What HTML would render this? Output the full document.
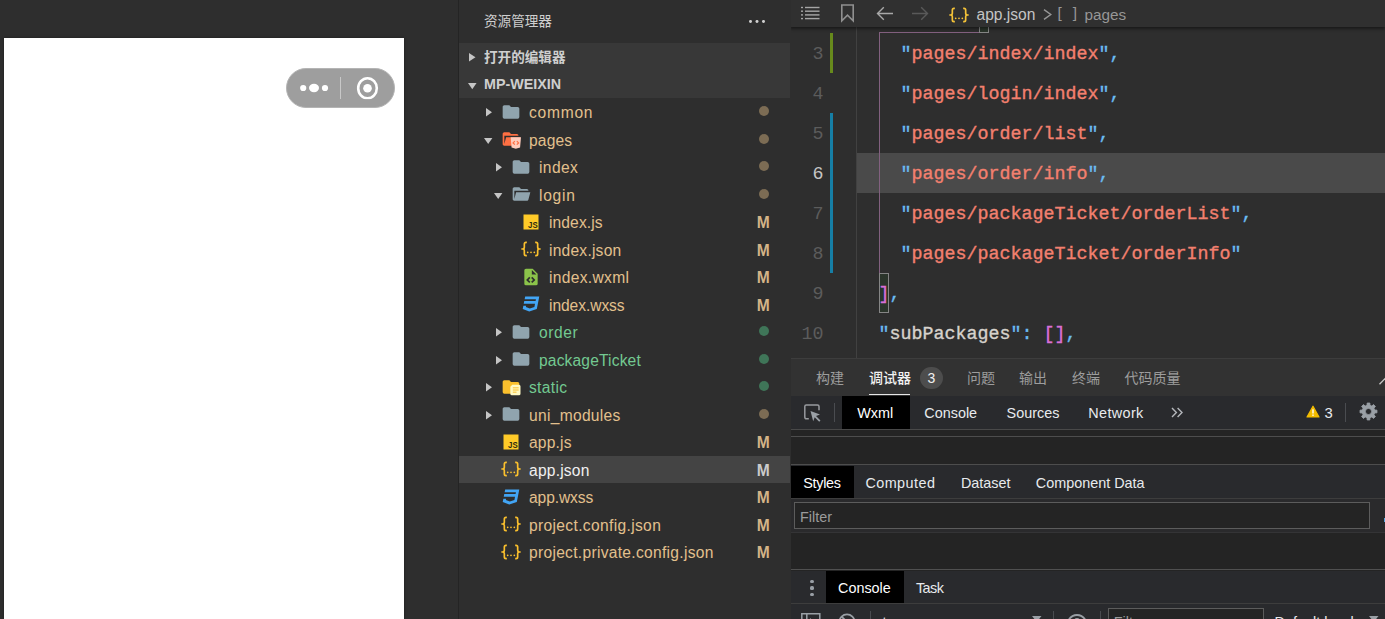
<!DOCTYPE html>
<html lang="zh-CN">
<head>
<meta charset="utf-8">
<title>app.json</title>
<style>
*{box-sizing:border-box;margin:0;padding:0}
html,body{width:1385px;height:619px;overflow:hidden;background:#2e2e2e}
body{position:relative;font-family:"Liberation Sans","Noto Sans CJK SC",sans-serif;color:#ccc;font-size:15.5px}
.abs{position:absolute}
svg{display:block;position:absolute;overflow:visible}

/* simulator */
#sim{left:0;top:0;width:458px;height:619px;background:#2e2e2e}
#phone{left:4px;top:38px;width:400px;height:581px;background:#fff;box-shadow:0 0 3px rgba(0,0,0,.35)}
#capsule{left:286px;top:68px;width:109px;height:40px;border-radius:20px;background:#9e9e9e;border:1px solid #b4b4b4}

/* explorer */
#exp{left:458px;top:0;width:332px;height:619px;background:#2e2e2e;border-left:1px solid #242424}
#exp .title{left:25px;top:0;height:43px;line-height:44.5px;font-size:13.6px;color:#cfcfcf}
#exp .band{left:0;top:43px;width:331px;height:55px;background:#383838}
.sec{left:25px;height:27.5px;line-height:27.5px;font-size:13.6px;font-weight:bold;color:#cfcfcf;white-space:nowrap}
.row{left:0;width:331px;height:27.5px;line-height:27.5px;white-space:nowrap}
.row .t{position:absolute;top:0;color:#e2c08d;font-size:15.6px}
.row.g .t{color:#73c991}
.row .m{position:absolute;left:290.700px;top:0;width:20px;text-align:right;color:#d3b488;font-weight:bold;font-size:15.6px}
.row .d{position:absolute;left:300px;top:7.75px;width:10px;height:10px;border-radius:5px;background:#7c6c54}
.row.g .d{background:#3f7558}
.row.sel{background:#444;height:27px}
.row.sel .t{color:#f0f0f0}.row.sel .m{color:#cbcbcb}

/* editor */
#ed{left:790px;top:0;width:595px;height:358px;background:#2e2e2e;overflow:hidden}
#ed:after{content:"";position:absolute;left:0;top:0;width:1px;height:358px;background:#2e2e2e}
#crumb{left:0;top:0;width:595px;height:27px;background:#303030;box-shadow:0 2px 3px rgba(0,0,0,.45)}
.code{font-family:"Liberation Mono",monospace;font-size:18.33px;white-space:pre;height:40px;line-height:40px;color:#d4d4d4;-webkit-text-stroke:.35px currentColor}
.ln{font-family:"Liberation Mono",monospace;font-size:18.33px;left:0;width:33.5px;text-align:right;height:40px;line-height:40px;color:#5c5c5c}
.s{color:#f3806f;-webkit-text-stroke-color:#f3806f}.q{color:#6cbcf2;-webkit-text-stroke-color:#6cbcf2}.p{color:#da70d6;-webkit-text-stroke-color:#da70d6}.k{color:#d6d2cc;-webkit-text-stroke-color:#d6d2cc}

/* panel */
#panel{left:790px;top:358px;width:595px;height:261px;background:#242424;overflow:hidden}
#panel:after{content:"";position:absolute;left:0;top:0;width:1px;height:261px;background:#2e2e2e}
.dt{font-size:14.4px;color:#e8eaed;white-space:nowrap}
</style>
</head>
<body>

<!-- ============ simulator ============ -->
<div id="sim" class="abs">
  <div id="phone" class="abs"></div>
  <div id="capsule" class="abs"></div>
  <svg style="left:286px;top:68px" width="109" height="40" viewBox="0 0 109 40">
    <circle cx="17.2" cy="20" r="3.1" fill="#fff"/>
    <ellipse cx="28" cy="20" rx="5" ry="4.2" fill="#fff"/>
    <circle cx="39" cy="20" r="3.1" fill="#fff"/>
    <rect x="54" y="9" width="1" height="22" fill="#c8c8c8"/>
    <clipPath id="cc"><rect x="60" y="0" width="40" height="31.200"/></clipPath><ellipse cx="81.500" cy="20.200" rx="9.300" ry="10" fill="none" stroke="#fff" stroke-width="2.600" clip-path="url(#cc)"/>
    <circle cx="81.5" cy="20.3" r="4.3" fill="#fff"/>
  </svg>
</div>

<!-- ============ explorer ============ -->
<div id="exp" class="abs">
  <div class="title abs">资源管理器</div>
  <div class="band abs"></div>
  <div class="sec abs" style="top:43.5px">打开的编辑器</div>
  <div class="sec abs" style="top:71px;font-size:14.3px">MP-WEIXIN</div>
  <svg style="left:10px;top:53.300px" width="6.500" height="8.600" viewBox="0 0 6.500 8.600"><path fill="#c5c5c5" d="M0 0L6.500 4.300 0 8.600z"/></svg>
  <svg style="left:8.600px;top:82.600px" width="8.600" height="6.200" viewBox="0 0 8.600 6.200"><path fill="#c5c5c5" d="M0 0h8.600L4.300 6.200z"/></svg>
  <div class="abs" style="left:290.300px;top:19.800px;width:2.800px;height:2.800px;border-radius:50%;background:#d0d0d0;box-shadow:6.500px 0 0 #d0d0d0,13px 0 0 #d0d0d0"></div>
  <div class="row abs" style="top:98.5px"><svg style="left:27px;top:9.6px" width="6" height="8.4" viewBox="0 0 6 8.4"><path fill="#c5c5c5" d="M0 0L6 4.200 0 8.400z"/></svg><svg style="left:42px;top:3.75px" width="20" height="20" viewBox="0 0 24 24"><path fill="#90a4ae" d="M10 4H4c-1.11 0-2 .89-2 2v12a2 2 0 0 0 2 2h16a2 2 0 0 0 2-2V8c0-1.11-.9-2-2-2h-8l-2-2z"/></svg><span class="t" style="left:70px;top:0.5px;letter-spacing:0.75px">common</span><span class="d"></span></div>
  <div class="row abs" style="top:126.0px"><svg style="left:25px;top:12px" width="8.4" height="6" viewBox="0 0 8.4 6"><path fill="#c5c5c5" d="M0 0h8.400L4.200 6z"/></svg><svg style="left:42px;top:2.75px" width="20" height="20" viewBox="0 0 24 24"><path fill="#ff7043" d="M19 20H4c-1.11 0-2-.9-2-2V6c0-1.11.89-2 2-2h6l2 2h7a2 2 0 0 1 2 2H4v10l2.14-8h17.07l-2.28 8.5c-.23.87-1.01 1.5-1.93 1.5z"/><path fill="#ffccbc" d="M11.6 10h12.4l-1.1 12.2-5.1 1.6-5.1-1.6z"/><path fill="none" stroke="#ff7043" stroke-width="1.5" d="M16.6 14.6l-2.1 2.1 2.1 2.1M19 14.6l2.1 2.1-2.1 2.1"/></svg><span class="t" style="left:70px;top:1px;letter-spacing:0.16px">pages</span><span class="d"></span></div>
  <div class="row abs" style="top:153.5px"><svg style="left:37px;top:9.6px" width="6" height="8.4" viewBox="0 0 6 8.4"><path fill="#c5c5c5" d="M0 0L6 4.200 0 8.400z"/></svg><svg style="left:52px;top:3.75px" width="20" height="20" viewBox="0 0 24 24"><path fill="#90a4ae" d="M10 4H4c-1.11 0-2 .89-2 2v12a2 2 0 0 0 2 2h16a2 2 0 0 0 2-2V8c0-1.11-.9-2-2-2h-8l-2-2z"/></svg><span class="t" style="left:80px;top:0.5px;letter-spacing:0.4px">index</span><span class="d"></span></div>
  <div class="row abs" style="top:181.0px"><svg style="left:35px;top:12px" width="8.4" height="6" viewBox="0 0 8.4 6"><path fill="#c5c5c5" d="M0 0h8.400L4.200 6z"/></svg><svg style="left:52px;top:2.75px" width="20" height="20" viewBox="0 0 24 24"><path fill="#90a4ae" d="M19 20H4c-1.11 0-2-.9-2-2V6c0-1.11.89-2 2-2h6l2 2h7a2 2 0 0 1 2 2H4v10l2.14-8h17.07l-2.28 8.5c-.23.87-1.01 1.5-1.93 1.5z"/></svg><span class="t" style="left:80px;top:1px;letter-spacing:0.72px">login</span><span class="d"></span></div>
  <div class="row abs" style="top:208.5px"><svg style="left:62px;top:3.75px" width="20" height="20" viewBox="0 0 24 24"><rect x="3" y="3" width="18" height="18" fill="#ffca28"/><text x="20" y="19.6" text-anchor="end" font-family="Liberation Sans, sans-serif" font-weight="bold" font-size="10.5" fill="#2e2a10" textLength="11.5" lengthAdjust="spacingAndGlyphs">JS</text></svg><span class="t" style="left:90px;top:0.5px;letter-spacing:0.1px">index.js</span><span class="m" style="top:0.5px">M</span></div>
  <div class="row abs" style="top:236.0px"><svg style="left:62px;top:2.75px" width="20" height="20" viewBox="0 0 24 24"><path fill="none" stroke="#fbc02d" stroke-width="2" stroke-linejoin="round" d="M7 4H6a2 2 0 0 0-2 2v4a2 2 0 0 1-2 2h-1.6M.4 12H2a2 2 0 0 1 2 2v4a2 2 0 0 0 2 2h1M17 4h1a2 2 0 0 1 2 2v4a2 2 0 0 0 2 2h1.6M23.600 12H22a2 2 0 0 0-2 2v4a2 2 0 0 1-2 2h-1"/><circle cx="8" cy="16" r="1.05" fill="#fbc02d"/><circle cx="12" cy="16" r="1.05" fill="#fbc02d"/><circle cx="16" cy="16" r="1.05" fill="#fbc02d"/></svg><span class="t" style="left:90px;top:1px;letter-spacing:0.22px">index.json</span><span class="m" style="top:1px">M</span></div>
  <div class="row abs" style="top:263.5px"><svg style="left:62px;top:3.75px" width="20" height="20" viewBox="0 0 24 24"><path fill="#8bc34a" d="M13 9h5.5L13 3.500V9M6 2h8l6 6v12a2 2 0 0 1-2 2H6a2 2 0 0 1-2-2V4c0-1.11.89-2 2-2m.12 13.500l3.740 3.740 1.420-1.410-2.330-2.330 2.330-2.330-1.420-1.410-3.740 3.740m11.160 0l-3.740-3.740-1.420 1.410 2.330 2.330-2.330 2.330 1.420 1.410 3.740-3.740z"/></svg><span class="t" style="left:90px;top:0.5px;letter-spacing:0.31px">index.wxml</span><span class="m" style="top:0.5px">M</span></div>
  <div class="row abs" style="top:291.0px"><svg style="left:62px;top:2.75px" width="20" height="20" viewBox="0 0 24 24"><path fill="#42a5f5" d="M5 3l-.65 3.340h13.590L17.500 8.500H3.920l-.66 3.330h13.590l-.76 3.810-5.480 1.810-4.750-1.810.33-1.640H2.850l-.79 4 7.850 3 9.050-3 1.200-6.030.24-1.210L21.940 3H5z"/></svg><span class="t" style="left:90px;top:1px;letter-spacing:-0.07px">index.wxss</span><span class="m" style="top:1px">M</span></div>
  <div class="row abs g" style="top:318.5px"><svg style="left:37px;top:9.6px" width="6" height="8.4" viewBox="0 0 6 8.4"><path fill="#c5c5c5" d="M0 0L6 4.200 0 8.400z"/></svg><svg style="left:52px;top:3.75px" width="20" height="20" viewBox="0 0 24 24"><path fill="#90a4ae" d="M10 4H4c-1.11 0-2 .89-2 2v12a2 2 0 0 0 2 2h16a2 2 0 0 0 2-2V8c0-1.11-.9-2-2-2h-8l-2-2z"/></svg><span class="t" style="left:80px;top:0.5px;letter-spacing:0.58px">order</span><span class="d"></span></div>
  <div class="row abs g" style="top:346.0px"><svg style="left:37px;top:9.6px" width="6" height="8.4" viewBox="0 0 6 8.4"><path fill="#c5c5c5" d="M0 0L6 4.200 0 8.400z"/></svg><svg style="left:52px;top:2.75px" width="20" height="20" viewBox="0 0 24 24"><path fill="#90a4ae" d="M10 4H4c-1.11 0-2 .89-2 2v12a2 2 0 0 0 2 2h16a2 2 0 0 0 2-2V8c0-1.11-.9-2-2-2h-8l-2-2z"/></svg><span class="t" style="left:80px;top:1px;letter-spacing:0.15px">packageTicket</span><span class="d"></span></div>
  <div class="row abs g" style="top:373.5px"><svg style="left:27px;top:9.6px" width="6" height="8.4" viewBox="0 0 6 8.4"><path fill="#c5c5c5" d="M0 0L6 4.200 0 8.400z"/></svg><svg style="left:42px;top:3.75px" width="20" height="20" viewBox="0 0 24 24"><path fill="#fbc02d" d="M10 4H4c-1.11 0-2 .89-2 2v12a2 2 0 0 0 2 2h16a2 2 0 0 0 2-2V8c0-1.11-.9-2-2-2h-8l-2-2z"/><path fill="#fff9c4" d="M13.600 9.400h8a1.800 1.800 0 0 1 1.800 1.800v9a1.800 1.800 0 0 1-1.800 1.800h-8.600a1.800 1.800 0 0 1-1.800-1.800v-8.400z"/><path fill="none" stroke="#fbc02d" stroke-width="1.200" d="M14.200 13h7M14.200 15.600h7M14.200 18.200h4.400"/></svg><span class="t" style="left:70px;top:0.5px;letter-spacing:0.32px">static</span><span class="d"></span></div>
  <div class="row abs" style="top:401.0px"><svg style="left:27px;top:9.6px" width="6" height="8.4" viewBox="0 0 6 8.4"><path fill="#c5c5c5" d="M0 0L6 4.200 0 8.400z"/></svg><svg style="left:42px;top:2.75px" width="20" height="20" viewBox="0 0 24 24"><path fill="#90a4ae" d="M10 4H4c-1.11 0-2 .89-2 2v12a2 2 0 0 0 2 2h16a2 2 0 0 0 2-2V8c0-1.11-.9-2-2-2h-8l-2-2z"/></svg><span class="t" style="left:70px;top:1px;letter-spacing:0.29px">uni_modules</span><span class="d"></span></div>
  <div class="row abs" style="top:428.5px"><svg style="left:42px;top:3.75px" width="20" height="20" viewBox="0 0 24 24"><rect x="3" y="3" width="18" height="18" fill="#ffca28"/><text x="20" y="19.6" text-anchor="end" font-family="Liberation Sans, sans-serif" font-weight="bold" font-size="10.5" fill="#2e2a10" textLength="11.5" lengthAdjust="spacingAndGlyphs">JS</text></svg><span class="t" style="left:70px;top:0.5px;letter-spacing:0.17px">app.js</span><span class="m" style="top:0.5px">M</span></div>
  <div class="row abs sel" style="top:456.0px"><svg style="left:42px;top:2.75px" width="20" height="20" viewBox="0 0 24 24"><path fill="none" stroke="#fbc02d" stroke-width="2" stroke-linejoin="round" d="M7 4H6a2 2 0 0 0-2 2v4a2 2 0 0 1-2 2h-1.6M.4 12H2a2 2 0 0 1 2 2v4a2 2 0 0 0 2 2h1M17 4h1a2 2 0 0 1 2 2v4a2 2 0 0 0 2 2h1.6M23.600 12H22a2 2 0 0 0-2 2v4a2 2 0 0 1-2 2h-1"/><circle cx="8" cy="16" r="1.05" fill="#fbc02d"/><circle cx="12" cy="16" r="1.05" fill="#fbc02d"/><circle cx="16" cy="16" r="1.05" fill="#fbc02d"/></svg><span class="t" style="left:70px;top:1px;letter-spacing:0.21px">app.json</span><span class="m" style="top:1px">M</span></div>
  <div class="row abs" style="top:483.5px"><svg style="left:42px;top:3.75px" width="20" height="20" viewBox="0 0 24 24"><path fill="#42a5f5" d="M5 3l-.65 3.340h13.590L17.500 8.500H3.920l-.66 3.330h13.590l-.76 3.810-5.480 1.810-4.750-1.810.33-1.640H2.850l-.79 4 7.850 3 9.050-3 1.200-6.030.24-1.210L21.940 3H5z"/></svg><span class="t" style="left:70px;top:0.5px;letter-spacing:-0.1px">app.wxss</span><span class="m" style="top:0.5px">M</span></div>
  <div class="row abs" style="top:511.0px"><svg style="left:42px;top:2.75px" width="20" height="20" viewBox="0 0 24 24"><path fill="none" stroke="#fbc02d" stroke-width="2" stroke-linejoin="round" d="M7 4H6a2 2 0 0 0-2 2v4a2 2 0 0 1-2 2h-1.6M.4 12H2a2 2 0 0 1 2 2v4a2 2 0 0 0 2 2h1M17 4h1a2 2 0 0 1 2 2v4a2 2 0 0 0 2 2h1.6M23.600 12H22a2 2 0 0 0-2 2v4a2 2 0 0 1-2 2h-1"/><circle cx="8" cy="16" r="1.05" fill="#fbc02d"/><circle cx="12" cy="16" r="1.05" fill="#fbc02d"/><circle cx="16" cy="16" r="1.05" fill="#fbc02d"/></svg><span class="t" style="left:70px;top:1px;letter-spacing:0.34px">project.config.json</span><span class="m" style="top:1px">M</span></div>
  <div class="row abs" style="top:538.5px"><svg style="left:42px;top:3.75px" width="20" height="20" viewBox="0 0 24 24"><path fill="none" stroke="#fbc02d" stroke-width="2" stroke-linejoin="round" d="M7 4H6a2 2 0 0 0-2 2v4a2 2 0 0 1-2 2h-1.6M.4 12H2a2 2 0 0 1 2 2v4a2 2 0 0 0 2 2h1M17 4h1a2 2 0 0 1 2 2v4a2 2 0 0 0 2 2h1.6M23.600 12H22a2 2 0 0 0-2 2v4a2 2 0 0 1-2 2h-1"/><circle cx="8" cy="16" r="1.05" fill="#fbc02d"/><circle cx="12" cy="16" r="1.05" fill="#fbc02d"/><circle cx="16" cy="16" r="1.05" fill="#fbc02d"/></svg><span class="t" style="left:70px;top:0.5px;letter-spacing:0.29px">project.private.config.json</span><span class="m" style="top:0.5px">M</span></div>
</div>

<!-- ============ editor ============ -->
<div id="ed" class="abs">
  <div class="abs" style="left:66px;top:27px;width:1px;height:331px;background:#414141"></div>
  <div class="abs" style="left:66.5px;top:153.3px;width:529px;height:39.600px;background:#4a4a4a"></div>
  <div class="abs" style="left:40px;top:33px;width:3px;height:40px;background:#678a1c"></div>
  <div class="abs" style="left:40px;top:113px;width:3px;height:160px;background:#167fa6"></div>
  <div class="abs" style="left:89.0px;top:32px;width:1px;height:241px;background:#82607f"></div>
  <div class="abs" style="left:89.0px;top:31.8px;width:109px;height:1px;background:#82607f"></div>
  <div class="abs" style="left:188.5px;top:-7px;width:10px;height:40px;border:1px solid #858585;background:#2b352b"></div>
  <div class="abs" style="left:89.0px;top:273px;width:10px;height:40px;border:1px solid #858585;background:#2b352b"></div>
  <div class="ln abs" style="top:-5.5px">2</div>
  <div class="code abs" style="left:66.5px;top:-5.5px">  <span class="k">"pages"</span><span class="q">:</span> <span class="p">[</span></div>
  <div class="ln abs" style="top:34.5px">3</div>
  <div class="code abs" style="left:66.5px;top:34.5px">    <span class="q">"</span><span class="s">pages/index/index</span><span class="q">",</span></div>
  <div class="ln abs" style="top:74.5px">4</div>
  <div class="code abs" style="left:66.5px;top:74.5px">    <span class="q">"</span><span class="s">pages/login/index</span><span class="q">",</span></div>
  <div class="ln abs" style="top:114.5px">5</div>
  <div class="code abs" style="left:66.5px;top:114.5px">    <span class="q">"</span><span class="s">pages/order/list</span><span class="q">",</span></div>
  <div class="ln abs" style="top:154.5px;color:#c6c6c6">6</div>
  <div class="code abs" style="left:66.5px;top:154.5px">    <span class="q">"</span><span class="s">pages/order/info</span><span class="q">",</span></div>
  <div class="ln abs" style="top:194.5px">7</div>
  <div class="code abs" style="left:66.5px;top:194.5px">    <span class="q">"</span><span class="s">pages/packageTicket/orderList</span><span class="q">",</span></div>
  <div class="ln abs" style="top:234.5px">8</div>
  <div class="code abs" style="left:66.5px;top:234.5px">    <span class="q">"</span><span class="s">pages/packageTicket/orderInfo</span><span class="q">"</span></div>
  <div class="ln abs" style="top:274.5px">9</div>
  <div class="code abs" style="left:66.5px;top:274.5px">  <span class="p">]</span><span class="q">,</span></div>
  <div class="ln abs" style="top:314.5px">10</div>
  <div class="code abs" style="left:66.5px;top:314.5px">  <span class="q">"</span><span class="k">subPackages</span><span class="q">":</span> <span class="p">[]</span><span class="q">,</span></div>
  <div id="crumb" class="abs"></div>
  <svg style="left:11px;top:6px" width="19" height="14" viewBox="0 0 19 14"><g fill="#a6a6a6"><rect x="0" y="0.8" width="2" height="1.4"/><rect x="4" y="0.8" width="14.500" height="1.4"/><rect x="0" y="4.5" width="2" height="1.4"/><rect x="4" y="4.5" width="14.500" height="1.4"/><rect x="0" y="8.2" width="2" height="1.4"/><rect x="4" y="8.2" width="14.500" height="1.4"/><rect x="0" y="11.9" width="2" height="1.4"/><rect x="4" y="11.9" width="14.500" height="1.4"/></g></svg>
  <svg style="left:50px;top:3px" width="16" height="20" viewBox="0 0 16 20"><path fill="none" stroke="#8f8f8f" stroke-width="1.6" d="M1.800 2h11.400v15.800L7.500 12.200 1.800 17.800z"/></svg>
  <svg style="left:86px;top:6px" width="18" height="15" viewBox="0 0 18 15"><path fill="none" stroke="#a8a8a8" stroke-width="1.4" d="M1.500 7.500h15.500M7.800 1.200L1.500 7.500l6.300 6.300"/></svg>
  <svg style="left:121px;top:6px" width="18" height="15" viewBox="0 0 18 15"><path fill="none" stroke="#595959" stroke-width="1.4" d="M1 7.500h15.500M10.200 1.200l6.300 6.300-6.300 6.300"/></svg>
  <svg style="left:159px;top:4.5px" width="20" height="20" viewBox="0 0 24 24"><path fill="none" stroke="#f5c338" stroke-width="2" stroke-linejoin="round" d="M7 4H6a2 2 0 0 0-2 2v4a2 2 0 0 1-2 2h-1.6M.4 12H2a2 2 0 0 1 2 2v4a2 2 0 0 0 2 2h1M17 4h1a2 2 0 0 1 2 2v4a2 2 0 0 0 2 2h1.6M23.600 12H22a2 2 0 0 0-2 2v4a2 2 0 0 1-2 2h-1"/><circle cx="8" cy="16" r="1.05" fill="#f5c338"/><circle cx="12" cy="16" r="1.05" fill="#f5c338"/><circle cx="16" cy="16" r="1.05" fill="#f5c338"/></svg>
  <div class="abs" style="left:186.500px;top:1px;height:27px;line-height:28px;font-size:15.6px;color:#c4c4c4;white-space:nowrap">app.json</div>
  <svg style="left:253px;top:9px" width="9" height="11" viewBox="0 0 9 11"><path fill="none" stroke="#979797" stroke-width="1.4" d="M1 .600l6.800 4.900L1 10.400"/></svg>
  <div class="abs" style="left:267.500px;top:0;height:27px;line-height:26px;font-size:15.4px;color:#979797;white-space:pre;letter-spacing:3.300px">[ ]</div>
  <div class="abs" style="left:294.500px;top:1px;height:27px;line-height:28px;font-size:15.3px;color:#979797;white-space:nowrap">pages</div>
</div>

<!-- ============ bottom panel ============ -->
<div id="panel" class="abs">
  <div class="abs" style="left:0px;top:0px;width:595px;height:37.5px;background:#323232"></div>
  <div class="abs" style="left:0px;top:0px;width:595px;height:1px;background:#3d3d3d"></div>
  <div class=" abs" style="left:26px;top:5.4px;height:30px;line-height:30px;font-size:14px;color:#9d9d9d;white-space:nowrap">构建</div>
  <div class=" abs" style="left:79px;top:5.4px;height:30px;line-height:30px;font-size:14px;color:#9d9d9d;white-space:nowrap;color:#f2f2f2;font-weight:500">调试器</div>
  <div class="abs" style="left:79px;top:36px;width:40.8px;height:1.2px;background:#e6e6e6"></div>
  <div class="abs" style="left:130.20000000000005px;top:8.800000000000011px;width:22.400px;height:22.400px;border-radius:50%;background:#4d4d4d;color:#f0f0f0;font-size:14px;line-height:22.400px;text-align:center">3</div>
  <div class=" abs" style="left:177px;top:5.4px;height:30px;line-height:30px;font-size:14px;color:#9d9d9d;white-space:nowrap">问题</div>
  <div class=" abs" style="left:229px;top:5.4px;height:30px;line-height:30px;font-size:14px;color:#9d9d9d;white-space:nowrap">输出</div>
  <div class=" abs" style="left:282px;top:5.4px;height:30px;line-height:30px;font-size:14px;color:#9d9d9d;white-space:nowrap">终端</div>
  <div class=" abs" style="left:334.5px;top:5.4px;height:30px;line-height:30px;font-size:14px;color:#9d9d9d;white-space:nowrap">代码质量</div>
  <svg style="left:589px;top:18px" width="8" height="9" viewBox="0 0 8 9"><path fill="none" stroke="#c8c8c8" stroke-width="1.3" d="M.500 8.300L7.500 1"/></svg>
  <div class="abs" style="left:0px;top:37.5px;width:595px;height:33.5px;background:#292a2d"></div>
  <div class="abs" style="left:0px;top:71px;width:595px;height:1px;background:#494949"></div>
  <svg style="left:13px;top:45px" width="19" height="19" viewBox="0 0 19 19"><path fill="none" stroke="#989a9e" stroke-width="1.5" d="M5.800 15.800H3.300a1.500 1.500 0 0 1-1.500-1.500V3.500A1.500 1.500 0 0 1 3.300 2h11.200A1.500 1.500 0 0 1 16 3.500v3.700"/><path fill="#9aa0a6" d="M7.500 8l9.500 3.400-4 1.500 4.500 4.500-1.300 1.300-4.500-4.500-1.500 4z"/></svg>
  <div class="abs" style="left:44px;top:44.5px;width:1px;height:19.5px;background:#4a4c50"></div>
  <div class="abs" style="left:52px;top:38px;width:68px;height:33px;background:#000"></div>
  <div class="dt abs" style="left:67.2px;top:39.5px;height:30px;line-height:30px;color:#fff">Wxml</div>
  <div class="dt abs" style="left:134.3px;top:39.5px;height:30px;line-height:30px">Console</div>
  <div class="dt abs" style="left:216.6px;top:39.5px;height:30px;line-height:30px">Sources</div>
  <div class="dt abs" style="left:298.3px;top:39.5px;height:30px;line-height:30px;letter-spacing:.37px">Network</div>
  <svg style="left:380.5px;top:49px" width="12" height="11" viewBox="0 0 12 11"><path fill="none" stroke="#b4b7bb" stroke-width="1.4" d="M1 1l4.400 4.500L1 10M6.600 1L11 5.500 6.600 10"/></svg>
  <svg style="left:516px;top:47px" width="14" height="13" viewBox="0 0 14 13"><path fill="#f4bd00" stroke="#f4bd00" stroke-width="1.2" stroke-linejoin="round" d="M7 1.200L13 12H1z"/><rect x="6.300" y="4.300" width="1.400" height="4.200" fill="#fff"/><rect x="6.300" y="9.500" width="1.400" height="1.400" fill="#fff"/></svg>
  <div class="dt abs" style="left:534.6px;top:39.5px;height:30px;line-height:30px;font-size:14.8px">3</div>
  <div class="abs" style="left:554.7px;top:44.5px;width:1px;height:19.5px;background:#4a4c50"></div>
  <svg style="left:569px;top:44.39999999999998px" width="19" height="19" viewBox="0 0 19 19"><path fill="#9aa0a6" fill-rule="evenodd" stroke="#9aa0a6" stroke-width=".8" stroke-linejoin="round" d="M8.01 3.28L8.15 1.01L10.85 1.01L10.99 3.28L12.84 4.04L14.55 2.54L16.46 4.45L14.96 6.16L15.72 8.01L17.99 8.15L17.99 10.85L15.72 10.99L14.96 12.84L16.46 14.55L14.55 16.46L12.84 14.96L10.99 15.72L10.85 17.99L8.15 17.99L8.01 15.72L6.16 14.96L4.45 16.46L2.54 14.55L4.04 12.84L3.28 10.99L1.01 10.85L1.01 8.15L3.28 8.01L4.04 6.16L2.54 4.45L4.45 2.54L6.16 4.04zM6.40 9.50a3.1 3.1 0 1 0 6.2 0a3.1 3.1 0 1 0 -6.2 0z"/></svg>
  <div class="abs" style="left:0px;top:78px;width:595px;height:1px;background:#4d4d4d"></div>
  <div class="abs" style="left:0px;top:105.8px;width:595px;height:1.2px;background:#4d4d4d"></div>
  <div class="abs" style="left:0px;top:107px;width:595px;height:33px;background:#292a2d"></div>
  <div class="abs" style="left:0px;top:140px;width:595px;height:1px;background:#3d3d3d"></div>
  <div class="abs" style="left:1px;top:107.8px;width:63px;height:32.2px;background:#000"></div>
  <div class="dt abs" style="left:13.3px;top:109.5px;height:30px;line-height:30px;color:#fff;letter-spacing:-.3px">Styles</div>
  <div class="dt abs" style="left:75.4px;top:109.5px;height:30px;line-height:30px;letter-spacing:.45px">Computed</div>
  <div class="dt abs" style="left:170.9px;top:109.5px;height:30px;line-height:30px">Dataset</div>
  <div class="dt abs" style="left:245.8px;top:109.5px;height:30px;line-height:30px">Component Data</div>
  <div class="abs" style="left:0px;top:141px;width:595px;height:33.5px;background:#2a2a2c"></div>
  <div class="abs" style="left:4px;top:144px;width:576px;height:26.700px;border:1px solid #5c5c5c;background:#242424"></div>
  <div class="dt abs" style="left:10px;top:143.7px;height:30px;line-height:30px;color:#9b9b9b">Filter</div>
  <div class="abs" style="left:593.6px;top:159.5px;width:1.4px;height:4px;background:#58a6dd"></div>
  <div class="abs" style="left:0px;top:173.8px;width:595px;height:1.2px;background:#343436"></div>
  <div class="abs" style="left:0px;top:211.2px;width:595px;height:1.2px;background:#505050"></div>
  <div class="abs" style="left:0px;top:212.5px;width:595px;height:32.5px;background:#292a2d"></div>
  <div class="abs" style="left:0px;top:245px;width:595px;height:1px;background:#3d3d3d"></div>
  <div class="abs" style="left:20.399999999999977px;top:221.6px;width:3.200px;height:3.200px;border-radius:50%;background:#9aa0a6"></div>
  <div class="abs" style="left:20.399999999999977px;top:228.4px;width:3.200px;height:3.200px;border-radius:50%;background:#9aa0a6"></div>
  <div class="abs" style="left:20.399999999999977px;top:235.2px;width:3.200px;height:3.200px;border-radius:50%;background:#9aa0a6"></div>
  <div class="abs" style="left:36px;top:212.5px;width:78px;height:32.5px;background:#000"></div>
  <div class="dt abs" style="left:48px;top:214.5px;height:30px;line-height:30px;color:#fff">Console</div>
  <div class="dt abs" style="left:125.9px;top:214.5px;height:30px;line-height:30px;letter-spacing:-.5px">Task</div>
  <div class="abs" style="left:0px;top:246px;width:595px;height:40px;background:#292a2d"></div>
  <svg style="left:11px;top:255px" width="20" height="17" viewBox="0 0 20 17"><path fill="none" stroke="#9aa0a6" stroke-width="1.5" d="M.800 .800h18v15.400h-18zM5.800 .800v15.400"/><path fill="#9aa0a6" d="M9 5l4 3.500-4 3.500z"/></svg>
  <svg style="left:48px;top:255px" width="18" height="18" viewBox="0 0 18 18"><circle cx="9" cy="9" r="7.600" fill="none" stroke="#9aa0a6" stroke-width="1.800"/><path stroke="#9aa0a6" stroke-width="1.800" d="M3.600 3.600l10.800 10.800"/></svg>
  <div class="abs" style="left:79.5px;top:253.3px;width:1px;height:10px;background:#4a4c50"></div>
  <div class="dt abs" style="left:92.5px;top:248.8px;height:30px;line-height:30px">top</div>
  <svg style="left:242px;top:258px" width="9.500" height="6" viewBox="0 0 9.500 6"><path fill="#9aa0a6" d="M0 0h9.500L4.750 6z"/></svg>
  <div class="abs" style="left:263px;top:253.3px;width:1px;height:10px;background:#4a4c50"></div>
  <svg style="left:276.5px;top:256px" width="20" height="14" viewBox="0 0 20 14"><path fill="none" stroke="#9aa0a6" stroke-width="1.800" d="M1 7C3.500 2.300 6.500 1 10 1s6.500 1.300 9 6c-2.500 4.700-5.500 6-9 6S3.500 11.700 1 7z"/><circle cx="10" cy="7" r="3" fill="#9aa0a6"/></svg>
  <div class="abs" style="left:309.7px;top:253.3px;width:1px;height:10px;background:#4a4c50"></div>
  <div class="abs" style="left:318px;top:250px;width:156px;height:27px;border:1px solid #5c5c5c;background:#242424"></div>
  <div class="dt abs" style="left:323.8px;top:248.8px;height:30px;line-height:30px;color:#9b9b9b">Filter</div>
  <div class="dt abs" style="left:484.6px;top:248.8px;height:30px;line-height:30px">Default levels</div>
  <svg style="left:578.8px;top:258px" width="9.500" height="6" viewBox="0 0 9.500 6"><path fill="#9aa0a6" d="M0 0h9.500L4.750 6z"/></svg>
</div>

</body>
</html>
